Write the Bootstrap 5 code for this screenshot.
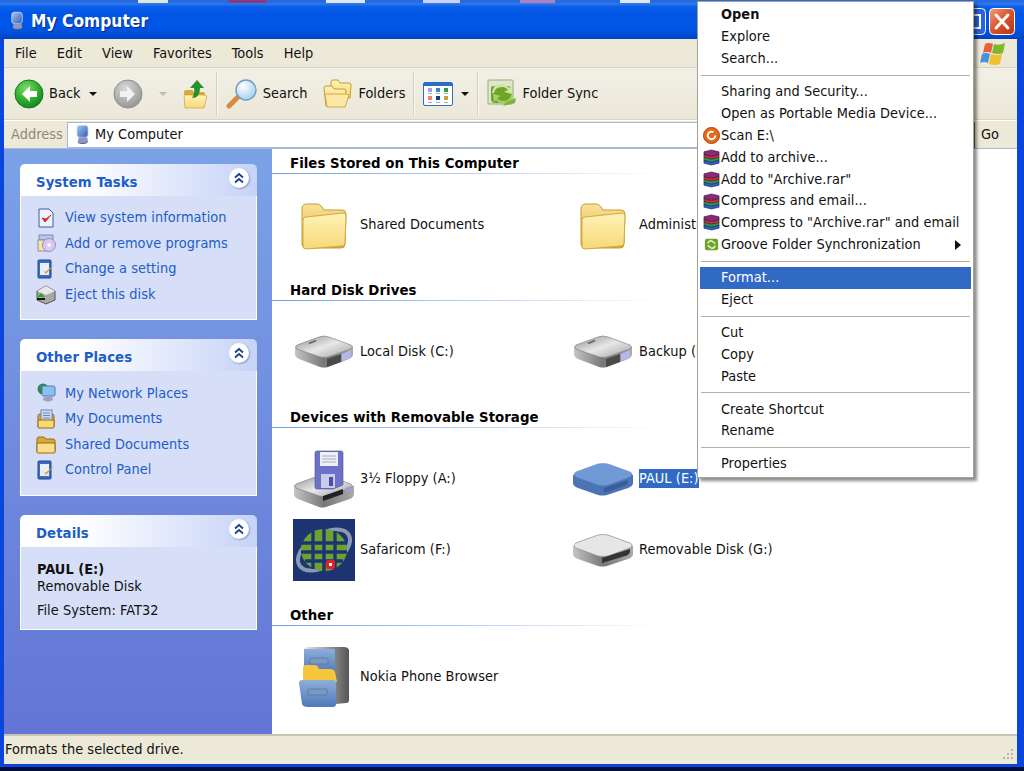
<!DOCTYPE html>
<html lang="en">
<head>
<meta charset="utf-8">
<title>My Computer</title>
<link href="https://cdn.jsdelivr.net/npm/bootstrap@5.3.0/dist/css/bootstrap.min.css" rel="stylesheet">
<style>
html,body{margin:0;height:771px;overflow:hidden;background:#00103a}
body{font-family:"DejaVu Sans Condensed","DejaVu Sans",sans-serif;font-size:14.4px;line-height:1.2;color:#111;letter-spacing:.05px}
svg{display:block;flex:none}
.xp-win{height:771px;position:relative;overflow:hidden}
.xp-strip{height:3px;background:linear-gradient(90deg,#2a6ae0 0 138px,#dfe6e0 138px 168px,#2a6ae0 168px 228px,#8a3a80 228px 267px,#2a6ae0 267px 326px,#dfe6f0 326px 365px,#2a6ae0 365px 423px,#d0d0f0 423px 460px,#2a6ae0 460px 520px,#b080c0 520px 555px,#2a6ae0 555px 620px,#dfe6f0 620px 650px,#2a6ae0 650px)}
.xp-title{height:36px;background:linear-gradient(180deg,#2f82ec 0,#0a5ce8 4px,#0055e5 12px,#0058e8 22px,#0050dc 30px,#0042c0 36px);padding-left:10px;color:#fff}
.xp-title b{font-size:17.2px;margin-left:7px;text-shadow:1px 1px 1px #0a2a80}
.xp-ctrls{margin-left:auto;padding-right:9px;gap:3px}
.xp-inner{height:728px;border-left:4px solid #0a46dc;border-right:7px solid #0a46dc;border-bottom:3px solid #0a46dc;background:#ece9d8;padding-top:1px}
.xp-menu{height:28px;padding-left:11px;gap:20px;position:relative;border-bottom:1px solid #d8d4c4}
.xp-flag{position:absolute;right:11px;top:2px}
.xp-tools{height:52px;padding-left:10px;border-bottom:1px solid #d8d4c4;background:linear-gradient(180deg,#f2f0e6,#ebe8d8)}
.xp-tool{gap:5px}
.xp-sep{width:2px;height:44px;background:#d4d0bf;border-right:1px solid #f8f7f0}
.xp-caret{width:0;height:0;border-left:4px solid transparent;border-right:4px solid transparent;border-top:4px solid #111}
.xp-caret.off{border-top-color:#c0bdb0}
.xp-addr{height:28px;border-top:1px solid #fff}
.xp-addr-label{width:63px;padding-left:7px;color:#8d8a7c}
.xp-field{width:906px;height:26px;background:#fff;border:1px solid #a9b9cf;padding-left:7px;gap:5px}
.xp-go{border-left:2px solid #3a7a3a;height:26px;padding-left:6px;margin-left:0}
.xp-main{height:586px;background:#fff;border-top:1px solid #a9b9cf}
.xp-side{width:268px;flex:none;padding:15px 15px 0 16px;background:linear-gradient(180deg,#7ba2e7,#6375d6);gap:19px}
.xp-panel{border:0;border-radius:5px 5px 0 0;background:transparent}
.xp-head{height:32px;padding:9px 8px 0 16px;border:0;border-radius:5px 5px 0 0;background:linear-gradient(90deg,#fff 25%,#c6d3f7);color:#215dc6;font-weight:700;font-size:14.8px;border-bottom:0}
.xp-chev{width:20px;height:20px;margin-left:auto;margin-top:-5px;background:#fff;border-radius:50%;box-shadow:1px 1px 2px #8a9ac8;display:flex;align-items:center;justify-content:center}
.xp-body{background:#d6dff7;border:1px solid #fff;border-top:0;padding:9px 0 12px 15px;color:#215dc6}
.xp-link{height:25.6px;gap:9px;white-space:nowrap}
.xp-det{padding:14px 0 12px 16px;color:#111;height:83px}
.xp-det p{margin:0}
.xp-det .xp-gap{margin-top:7px}
.xp-view{flex:1;padding-top:2px;overflow:hidden}
.xp-group{height:23px;padding:3px 0 0 18px;font-weight:700;font-size:14.8px;color:#000;background:linear-gradient(90deg,#6e9fe0,#fff) no-repeat left bottom/390px 1px}
.xp-rows{display:grid;grid-template-columns:279px 279px;padding:15px 0 18px 18px;grid-auto-rows:71px}
.xp-item{display:flex;align-items:center;white-space:nowrap}
.xp-slot{width:70px;flex:none;display:flex;justify-content:center;padding-right:2px}
.xp-sel{background:#316ac5;color:#fff;padding:1px 0}
.xp-status{height:29px;padding-left:1px;border-top:2px solid #c8c5b4;position:relative;background:#ece9d8}
.xp-grip{position:absolute;right:2px;bottom:2px}
.xp-ctx{position:absolute;left:697px;top:1px;width:277px;margin:0;padding:2px;display:block;background:#fff;border:1px solid #a6a396;border-radius:0;box-shadow:3px 3px 3px rgba(0,0,0,.45);font-size:14.4px}
.xp-ctx .dropdown-item{height:21.9px;padding:0 0 0 3px;display:flex;align-items:center;color:#111;letter-spacing:.05px}
.xp-ctx .dropdown-item.active{background:#316ac5;color:#fff}
.xp-ctx .dropdown-divider{margin:5px 1px;border-top:1px solid #b4b1a2;opacity:1}
.xp-ico{width:18px;flex:none}
.xp-arrow{margin-left:auto;margin-right:10px}
</style>
</head>
<body>
<svg width="0" height="0" class="position-absolute">
<defs>
<linearGradient id="gFold" x1="0" y1="0" x2="0" y2="1"><stop offset="0" stop-color="#fff3b8"/><stop offset="1" stop-color="#f6d878"/></linearGradient>
<linearGradient id="gBack" x1="0" y1="0" x2="0" y2="1"><stop offset="0" stop-color="#fbe39a"/><stop offset="1" stop-color="#d9a83a"/></linearGradient>
<linearGradient id="gTop" x1="0" y1="0" x2="1" y2="1"><stop offset="0" stop-color="#8d8d8d"/><stop offset=".5" stop-color="#e8e8e8"/><stop offset="1" stop-color="#a0a0a0"/></linearGradient>
<linearGradient id="gSide" x1="0" y1="0" x2="1" y2="0"><stop offset="0" stop-color="#c4c4c4"/><stop offset=".5" stop-color="#777"/><stop offset="1" stop-color="#aaa"/></linearGradient>
<radialGradient id="gGreen" cx=".4" cy=".3" r=".8"><stop offset="0" stop-color="#7fdc6a"/><stop offset=".6" stop-color="#2aa82a"/><stop offset="1" stop-color="#0c7a1c"/></radialGradient>
<radialGradient id="gGrey" cx=".4" cy=".3" r=".8"><stop offset="0" stop-color="#d8d8d8"/><stop offset="1" stop-color="#8e8e8e"/></radialGradient>
<radialGradient id="gGlass" cx=".35" cy=".3" r=".8"><stop offset="0" stop-color="#fff"/><stop offset="1" stop-color="#9ccbec"/></radialGradient>
<linearGradient id="gBlue" x1="0" y1="0" x2="1" y2="1"><stop offset="0" stop-color="#a8c8f4"/><stop offset="1" stop-color="#2f5cb8"/></linearGradient>
<linearGradient id="gCab" x1="0" y1="0" x2="1" y2="0"><stop offset="0" stop-color="#e8e8e8"/><stop offset="1" stop-color="#555"/></linearGradient>
<linearGradient id="gDraw" x1="0" y1="0" x2="0" y2="1"><stop offset="0" stop-color="#8cafdb"/><stop offset="1" stop-color="#4f79b8"/></linearGradient>
<linearGradient id="gClose" x1="0" y1="0" x2="1" y2="1"><stop offset="0" stop-color="#f0a080"/><stop offset=".5" stop-color="#d8522c"/><stop offset="1" stop-color="#b83214"/></linearGradient>

<symbol id="pc" viewBox="0 0 16 22"><rect x="2" y="1" width="12" height="13" rx="3" fill="url(#gBlue)" stroke="#dfe8f8" stroke-width=".8"/><path d="M4 14h9l1 5q-5 3-11 0z" fill="#8c98c0"/><path d="M3 19q5 2 10 0v1q-5 2-10 0z" fill="#505c90"/></symbol>
<symbol id="folder" viewBox="0 0 48 50"><path d="M2 9q0-5 5-5h10q3 0 5 3l2 3h18q4 0 4 4l-1 30q0 4-4 4H6q-4 0-4-4z" fill="url(#gBack)" stroke="#c79b2e"/><path d="M3 20q0-3 3-3l37-4q3 0 3 3l-1 27q0 3-3 3L6 49q-3 0-3-3z" fill="url(#gFold)" stroke="#d5a93c"/></symbol>
<symbol id="hdd" viewBox="0 0 60 34"><path d="M1 12v7q0 3 4 5l21 8q4 1 8 0l21-8q4-2 4-5v-7z" fill="url(#gSide)"/><path d="M3 10 25 2q5-2 10 0l22 8q3 2 0 4l-23 8q-4 1-8 0L3 14q-3-2 0-4z" fill="url(#gTop)" stroke="#777" stroke-width=".6"/><path d="m14 8 7-3 2 1-7 3z" fill="#666"/><path d="m33 24 14-5v8l-14 5z" fill="#4a4a4a"/><path d="m48 19 9-4v6q-1 2-3 3l-6 2z" fill="#b4b8ea"/></symbol>
<symbol id="floppy" viewBox="0 0 62 58"><path d="M1 36v8q0 3 4 5l21 8q3 1 7 0l24-8q4-2 4-5v-8z" fill="url(#gSide)"/><path d="M3 34 25 26q5-2 10 0l23 8q3 2 0 4l-24 8q-4 1-8 0L3 38q-3-2 0-4z" fill="url(#gTop)" stroke="#777" stroke-width=".6"/><path d="m30 46 20-7v5l-20 7z" fill="#222"/><path d="m52 38 6-2v5l-6 2z" fill="#9a9fd0"/><path d="M22 3q0-2 2-2h24q2 0 2 2v32l-10 4H24q-2 0-2-2z" fill="#6d71c8" stroke="#4c50a0" stroke-width=".6"/><rect x="27" y="2" width="18" height="14" fill="#eef0f8"/><path d="M29 6h14M29 9h14M29 12h14" stroke="#aab" stroke-width="1"/><path d="M28 24h14v14H28z" fill="#c9cbe8"/><rect x="36" y="27" width="4" height="9" fill="#4c50a0"/></symbol>
<symbol id="blue" viewBox="0 0 62 34"><path d="M1 13v8q0 3 5 5l20 7q4 1 9 0l21-7q5-2 5-5v-8z" fill="#4a74b4"/><path d="M4 10 26 2q5-1 10 0l22 8q4 2 0 5L36 23q-5 1-10 0L4 15q-4-2 0-5z" fill="#6f9ad6" stroke="#5a84c4" stroke-width=".6"/><path d="m32 26 24-8v3q-1 2-4 3l-20 7z" fill="#3a5c9c"/></symbol>
<symbol id="grey" viewBox="0 0 62 34"><path d="M1 13v8q0 3 5 5l20 7q4 1 9 0l21-7q5-2 5-5v-8z" fill="url(#gSide)"/><path d="M4 10 26 2q5-1 10 0l22 8q4 2 0 5L36 23q-5 1-10 0L4 15q-4-2 0-5z" fill="#e6e6e6" stroke="#8a8a8a" stroke-width=".7"/><path d="m30 25 28-9v3q-1 3-5 4l-23 7z" fill="#333"/></symbol>
<symbol id="safari" viewBox="0 0 62 62"><rect width="62" height="62" fill="#1c3570"/><ellipse cx="31" cy="31" rx="29" ry="16" transform="rotate(-32 31 31)" fill="none" stroke="#8c98b4" stroke-width="4"/><ellipse cx="31" cy="31" rx="23" ry="21" fill="#6fa032"/><path d="M9 24h44M8 33h46M12 42h38M20 12v38M31 10v42M42 12v38" stroke="#1c3570" stroke-width="3.4"/><rect x="33" y="41" width="9" height="9" rx="2" fill="#e02028"/><rect x="36" y="44" width="3" height="3" fill="#fff"/></symbol>
<symbol id="cabinet" viewBox="0 0 52 62"><path d="M6 4q1-3 4-3h36q4 0 5 3v50q0 3-3 3L18 60z" fill="url(#gCab)"/><path d="M6 3h29q2 0 2 2v22H8L6 24z" fill="url(#gDraw)"/><rect x="12" y="12" width="18" height="6" rx="1" fill="#7a98c0" stroke="#4a6ca0" stroke-width=".6"/><path d="M5 22q0-3 3-3h9q2 0 3 2l1 2h11q4 0 5 3l2 10H5z" fill="#f5c53c"/><path d="M1 37q0-3 3-3h31q3 0 3 3v21q0 3-3 3H10q-5 0-6-3z" fill="url(#gDraw)"/><rect x="10" y="43" width="19" height="6" rx="1" fill="#7a98c0" stroke="#4a6ca0" stroke-width=".6"/></symbol>

<symbol id="back" viewBox="0 0 30 30"><circle cx="15" cy="15" r="14" fill="url(#gGreen)" stroke="#177a22"/><path d="M16 7 8 15l8 8v-5h7v-6h-7z" fill="#fff"/></symbol>
<symbol id="fwd" viewBox="0 0 30 30"><circle cx="15" cy="15" r="14" fill="url(#gGrey)" stroke="#8f8f8f"/><path d="m14 7 8 8-8 8v-5H7v-6h7z" fill="#f2f2f2"/></symbol>
<symbol id="up" viewBox="0 0 25 30"><path d="M1 13q0-2 2-2h6l2 2h9q2 0 2 2l-1 14H2z" fill="#d9a83a"/><path d="M1 16h20l3 1-3 12H2z" fill="url(#gFold)" stroke="#c79b2e" stroke-width=".6"/><path d="M14 1 7 9h4q1 5-2 10 8 0 8-10h4z" fill="#25932c"/></symbol>
<symbol id="search" viewBox="0 0 32 32"><path d="M12 19 3 28" stroke="#d88a40" stroke-width="5" stroke-linecap="round"/><circle cx="20" cy="12" r="10" fill="url(#gGlass)" stroke="#6f9cc4" stroke-width="1.4"/></symbol>
<symbol id="folders" viewBox="0 0 30 30"><path d="M8 3q0-2 2-2h5l2 3h9q2 0 2 2l-1 13H8z" fill="url(#gFold)" stroke="#c79b2e"/><path d="M1 9q0-2 2-2h6l2 3h10q2 0 2 2l-2 15H3z" fill="url(#gFold)" stroke="#c79b2e"/><path d="M2 15h21l3 1-4 12H4z" fill="#fbe9a8" stroke="#d5a93c"/></symbol>
<symbol id="views" viewBox="0 0 30 24"><rect x=".5" y=".5" width="29" height="23" rx="1.5" fill="#fff" stroke="#2a6cc8"/><rect x="1" y="1" width="28" height="3" fill="#2a6cc8"/><rect x="5" y="6" width="4" height="4" fill="#a4a0e0"/><rect x="13" y="6" width="4" height="4" fill="#3a80d8"/><rect x="21" y="6" width="4" height="4" fill="#2a9a50"/><path d="M5 11.500h4M13 11.500h4M21 11.500h4M5 20.500h4M13 20.500h4M21 20.500h4" stroke="#aaa"/><rect x="5" y="14" width="4" height="4" fill="#f08070"/><rect x="13" y="14" width="4" height="4" fill="#103a9a"/><rect x="21" y="14" width="4" height="4" fill="#c8a040"/></symbol>
<symbol id="sync" viewBox="0 0 30 30"><rect x="1" y="1" width="25" height="24" rx="1" fill="#dfe6cc" stroke="#9aa880"/><path d="M4 9q0-2 2-2h14q4 0 5 3v9q0 4-4 5H8q-4 0-4-4z" fill="#6da52a"/><path d="M7 14q1-6 8-6 4 0 6 3l-4 2 8 2V7l-3 2q-3-4-8-4-8 0-9 9z" fill="#cfe6a0"/><path d="M24 16q-1 6-8 6-4 0-6-3l4-2-8-2 1 8 2-2q3 4 8 4 8 0 9-9z" fill="#a9d068"/><path d="m16 27 12-3 1-5-10 4z" fill="#7fb33a"/></symbol>
<symbol id="flag" viewBox="0 0 26 24"><path d="M5 2q4-2 8 0l-2 9q-4-2-8 0z" fill="#e8603c"/><path d="M14 2q5 2 11-1l-2 10q-5 2-11 0z" fill="#7cb82c"/><path d="M2 12q4-2 8 0l-2 9q-4-2-8 0z" fill="#4a90e0"/><path d="M11 12q5 2 11 0l-2 10q-5 2-11 0z" fill="#f0c030"/></symbol>
<symbol id="close" viewBox="0 0 26 27"><rect x=".5" y=".5" width="25" height="26" rx="4" fill="url(#gClose)" stroke="#fff"/><path d="m7 7 12 13M19 7 7 20" stroke="#fff" stroke-width="3" stroke-linecap="round"/></symbol>
<symbol id="max" viewBox="0 0 26 27"><rect x=".5" y=".5" width="25" height="26" rx="4" fill="#2a62e0" stroke="#fff"/><rect x="6" y="7" width="14" height="13" fill="none" stroke="#fff" stroke-width="2"/></symbol>
<symbol id="chev" viewBox="0 0 12 12"><path d="M2 5.500 6 2l4 3.500M2 10.500 6 7l4 3.500" fill="none" stroke="#1c3f94" stroke-width="1.800"/></symbol>

<symbol id="i-info" viewBox="0 0 20 20"><path d="M3 1h10l4 4v14H3z" fill="#eef2fc" stroke="#3a5ca0"/><path d="m6 10 3 4 6-7-5 4z" fill="#e03020" stroke="#e03020"/></symbol>
<symbol id="i-add" viewBox="0 0 20 20"><path d="M3 2h14v5H3z" fill="#b8c8e8" stroke="#7a8ab0"/><path d="M2 7h12v11H2z" fill="#f0e8a0" stroke="#8a8ab0"/><circle cx="13" cy="12" r="6.500" fill="#d8c8f0" stroke="#9a8ac8"/><circle cx="13" cy="12" r="1.800" fill="#fff"/></symbol>
<symbol id="i-set" viewBox="0 0 20 20"><rect x="2" y="1" width="13" height="18" rx="1" fill="#3a6cc0" stroke="#1f4590"/><rect x="4" y="4" width="9" height="12" fill="#e8eefc"/><path d="m6 10 3 3 9-7-8 9z" fill="#d8a030"/></symbol>
<symbol id="i-eject" viewBox="0 0 20 20"><path d="M10 1 19 6v9l-9 4-9-4V6z" fill="#a8a8a8" stroke="#555"/><path d="m10 1 9 5-9 4-9-4z" fill="#e8e8e8"/><path d="M1 12h8l-4-4z" fill="#22a828"/><rect x="1" y="13" width="8" height="2" fill="#111"/></symbol>
<symbol id="i-net" viewBox="0 0 20 20"><circle cx="7" cy="6" r="5.500" fill="#2f8a40"/><path d="M3 4q3-3 6 0-2 3-6 0z" fill="#3a7ad8"/><rect x="6" y="3" width="13" height="10" rx="1.500" fill="#8cc0f0" stroke="#4a7ab8"/><path d="M8 13h8l1 4q-5 3-10 0z" fill="#a0a0c8"/></symbol>
<symbol id="i-docs" viewBox="0 0 20 20"><path d="M2 7q0-2 2-2h12q2 0 2 2v11H2z" fill="#d9a83a" stroke="#946c10"/><rect x="5" y="1" width="11" height="12" fill="#cfdcf4" stroke="#6a86b8"/><path d="M7 4h7M7 6.500h7M7 9h7" stroke="#6a86b8"/><path d="M2 11h16v7q0 1-1 1H3q-1 0-1-1z" fill="#f8d870" stroke="#946c10"/></symbol>
<symbol id="i-fold" viewBox="0 0 20 20"><path d="M1 5q0-2 2-2h5l2 2h7q2 0 2 2v11H1z" fill="#d9a83a" stroke="#946c10"/><path d="M1 9h18v9q0 1-1 1H2q-1 0-1-1z" fill="#fbe08a" stroke="#946c10"/></symbol>
<symbol id="i-rar" viewBox="0 0 18 18"><path d="M1 3 9 1l8 2v3l-8 2-8-2z" fill="#8a2a78" stroke="#3a1030" stroke-width=".6"/><path d="m1 6 8 2 8-2v3l-8 2-8-2z" fill="#c83040" stroke="#3a1030" stroke-width=".6"/><path d="m1 9 8 2 8-2v3l-8 2-8-2z" fill="#2f9a50" stroke="#103a20" stroke-width=".6"/><path d="m1 12 8 2 8-2v3l-8 2-8-2z" fill="#2f60c0" stroke="#102060" stroke-width=".6"/></symbol>
<symbol id="i-scan" viewBox="0 0 18 18"><circle cx="9" cy="9" r="8.500" fill="#e86a18" stroke="#a04008"/><path d="M13 9a4 4 0 1 1-2-3.500" fill="none" stroke="#fff" stroke-width="2"/></symbol>
<symbol id="i-groove" viewBox="0 0 18 18"><rect x="2" y="3" width="14" height="12" rx="2" fill="#6da52a"/><path d="M5 8q1-3 4-3l4 3M13 10q-1 3-4 3l-4-3" fill="none" stroke="#e4f2c4" stroke-width="1.600"/></symbol>
</defs>
</svg>

<div class="xp-win">
  <div class="xp-strip"></div>
  <div class="xp-title d-flex align-items-center">
    <svg width="14" height="22"><use href="#pc"/></svg>
    <b>My Computer</b>
    <div class="xp-ctrls d-flex">
      <svg width="26" height="27"><use href="#max"/></svg>
      <svg width="26" height="27"><use href="#close"/></svg>
    </div>
  </div>
  <div class="xp-inner">
    <div class="xp-menu d-flex align-items-center">
      <span>File</span><span>Edit</span><span>View</span><span>Favorites</span><span>Tools</span><span>Help</span>
      <svg class="xp-flag" width="26" height="24"><use href="#flag"/></svg>
    </div>
    <div class="xp-tools d-flex align-items-center">
      <div class="xp-tool d-flex align-items-center"><svg width="30" height="30"><use href="#back"/></svg><span>Back</span></div>
      <div class="xp-caret ms-2 me-3 ps-0"></div>
      <svg width="30" height="30"><use href="#fwd"/></svg>
      <div class="xp-caret off ms-3"></div>
      <svg class="ms-3" width="25" height="30"><use href="#up"/></svg>
      <div class="xp-sep ms-2"></div>
      <div class="xp-tool d-flex align-items-center ms-2"><svg width="32" height="32"><use href="#search"/></svg><span>Search</span></div>
      <div class="xp-tool d-flex align-items-center ms-3"><svg width="30" height="30"><use href="#folders"/></svg><span>Folders</span></div>
      <div class="xp-sep ms-2"></div>
      <svg class="ms-2" width="30" height="24"><use href="#views"/></svg>
      <div class="xp-caret ms-2"></div>
      <div class="xp-sep ms-2"></div>
      <div class="xp-tool d-flex align-items-center ms-2"><svg width="30" height="30"><use href="#sync"/></svg><span>Folder Sync</span></div>
    </div>
    <div class="xp-addr d-flex align-items-center">
      <div class="xp-addr-label">Address</div>
      <div class="xp-field d-flex align-items-center"><svg width="15" height="21"><use href="#pc"/></svg><span>My Computer</span></div>
      <div class="xp-go d-flex align-items-center">Go</div>
    </div>
    <div class="xp-main d-flex">
      <aside class="xp-side d-flex flex-column">
        <div class="card xp-panel">
          <div class="card-header xp-head d-flex"><span>System Tasks</span><span class="xp-chev"><svg width="12" height="12"><use href="#chev"/></svg></span></div>
          <div class="card-body xp-body">
            <div class="xp-link d-flex align-items-center"><svg width="20" height="20"><use href="#i-info"/></svg>View system information</div>
            <div class="xp-link d-flex align-items-center"><svg width="20" height="20"><use href="#i-add"/></svg>Add or remove programs</div>
            <div class="xp-link d-flex align-items-center"><svg width="20" height="20"><use href="#i-set"/></svg>Change a setting</div>
            <div class="xp-link d-flex align-items-center"><svg width="20" height="20"><use href="#i-eject"/></svg>Eject this disk</div>
          </div>
        </div>
        <div class="card xp-panel">
          <div class="card-header xp-head d-flex"><span>Other Places</span><span class="xp-chev"><svg width="12" height="12"><use href="#chev"/></svg></span></div>
          <div class="card-body xp-body">
            <div class="xp-link d-flex align-items-center"><svg width="20" height="20"><use href="#i-net"/></svg>My Network Places</div>
            <div class="xp-link d-flex align-items-center"><svg width="20" height="20"><use href="#i-docs"/></svg>My Documents</div>
            <div class="xp-link d-flex align-items-center"><svg width="20" height="20"><use href="#i-fold"/></svg>Shared Documents</div>
            <div class="xp-link d-flex align-items-center"><svg width="20" height="20"><use href="#i-set"/></svg>Control Panel</div>
          </div>
        </div>
        <div class="card xp-panel">
          <div class="card-header xp-head d-flex"><span>Details</span><span class="xp-chev"><svg width="12" height="12"><use href="#chev"/></svg></span></div>
          <div class="card-body xp-body xp-det">
            <p class="fw-bold">PAUL (E:)</p>
            <p>Removable Disk</p>
            <p class="xp-gap">File System: FAT32</p>
          </div>
        </div>
      </aside>
      <main class="xp-view">
        <div class="xp-group">Files Stored on This Computer</div>
        <div class="xp-rows">
          <div class="xp-item"><span class="xp-slot"><svg width="48" height="50"><use href="#folder"/></svg></span>Shared Documents</div>
          <div class="xp-item"><span class="xp-slot"><svg width="48" height="50"><use href="#folder"/></svg></span>Administrator's Documents</div>
        </div>
        <div class="xp-group">Hard Disk Drives</div>
        <div class="xp-rows">
          <div class="xp-item"><span class="xp-slot"><svg width="60" height="34"><use href="#hdd"/></svg></span>Local Disk (C:)</div>
          <div class="xp-item"><span class="xp-slot"><svg width="60" height="34"><use href="#hdd"/></svg></span>Backup (D:)</div>
        </div>
        <div class="xp-group">Devices with Removable Storage</div>
        <div class="xp-rows">
          <div class="xp-item"><span class="xp-slot"><svg width="62" height="58"><use href="#floppy"/></svg></span>3½ Floppy (A:)</div>
          <div class="xp-item"><span class="xp-slot"><svg width="62" height="34"><use href="#blue"/></svg></span><span class="xp-sel">PAUL (E:)</span></div>
          <div class="xp-item"><span class="xp-slot"><svg width="62" height="62"><use href="#safari"/></svg></span>Safaricom (F:)</div>
          <div class="xp-item"><span class="xp-slot"><svg width="62" height="34"><use href="#grey"/></svg></span>Removable Disk (G:)</div>
        </div>
        <div class="xp-group">Other</div>
        <div class="xp-rows">
          <div class="xp-item"><span class="xp-slot"><svg width="52" height="62"><use href="#cabinet"/></svg></span>Nokia Phone Browser</div>
        </div>
      </main>
    </div>
    <div class="xp-status d-flex align-items-center">Formats the selected drive.
      <svg class="xp-grip" width="14" height="14" viewBox="0 0 14 14"><path d="M10 2h2v2h-2zM6 6h2v2H6zM10 6h2v2h-2zM2 10h2v2H2zM6 10h2v2H6zM10 10h2v2h-2z" fill="#b8b5a4"/></svg>
    </div>
  </div>

  <ul class="dropdown-menu show xp-ctx list-unstyled">
    <li><a class="dropdown-item fw-bold"><span class="xp-ico"></span>Open</a></li>
    <li><a class="dropdown-item"><span class="xp-ico"></span>Explore</a></li>
    <li><a class="dropdown-item"><span class="xp-ico"></span>Search...</a></li>
    <li><hr class="dropdown-divider"></li>
    <li><a class="dropdown-item"><span class="xp-ico"></span>Sharing and Security...</a></li>
    <li><a class="dropdown-item"><span class="xp-ico"></span>Open as Portable Media Device...</a></li>
    <li><a class="dropdown-item"><span class="xp-ico"><svg width="17" height="17"><use href="#i-scan"/></svg></span>Scan E:\</a></li>
    <li><a class="dropdown-item"><span class="xp-ico"><svg width="17" height="17"><use href="#i-rar"/></svg></span>Add to archive...</a></li>
    <li><a class="dropdown-item"><span class="xp-ico"><svg width="17" height="17"><use href="#i-rar"/></svg></span>Add to "Archive.rar"</a></li>
    <li><a class="dropdown-item"><span class="xp-ico"><svg width="17" height="17"><use href="#i-rar"/></svg></span>Compress and email...</a></li>
    <li><a class="dropdown-item"><span class="xp-ico"><svg width="17" height="17"><use href="#i-rar"/></svg></span>Compress to "Archive.rar" and email</a></li>
    <li><a class="dropdown-item"><span class="xp-ico"><svg width="17" height="17"><use href="#i-groove"/></svg></span>Groove Folder Synchronization<svg class="xp-arrow" width="6" height="10" viewBox="0 0 6 10"><path d="M0 0l6 5-6 5z" fill="#111"/></svg></a></li>
    <li><hr class="dropdown-divider"></li>
    <li><a class="dropdown-item active"><span class="xp-ico"></span>Format...</a></li>
    <li><a class="dropdown-item"><span class="xp-ico"></span>Eject</a></li>
    <li><hr class="dropdown-divider"></li>
    <li><a class="dropdown-item"><span class="xp-ico"></span>Cut</a></li>
    <li><a class="dropdown-item"><span class="xp-ico"></span>Copy</a></li>
    <li><a class="dropdown-item"><span class="xp-ico"></span>Paste</a></li>
    <li><hr class="dropdown-divider"></li>
    <li><a class="dropdown-item"><span class="xp-ico"></span>Create Shortcut</a></li>
    <li><a class="dropdown-item"><span class="xp-ico"></span>Rename</a></li>
    <li><hr class="dropdown-divider"></li>
    <li><a class="dropdown-item"><span class="xp-ico"></span>Properties</a></li>
  </ul>
</div>
<script src="https://cdn.jsdelivr.net/npm/bootstrap@5.3.0/dist/js/bootstrap.bundle.min.js"></script>
</body>
</html>
